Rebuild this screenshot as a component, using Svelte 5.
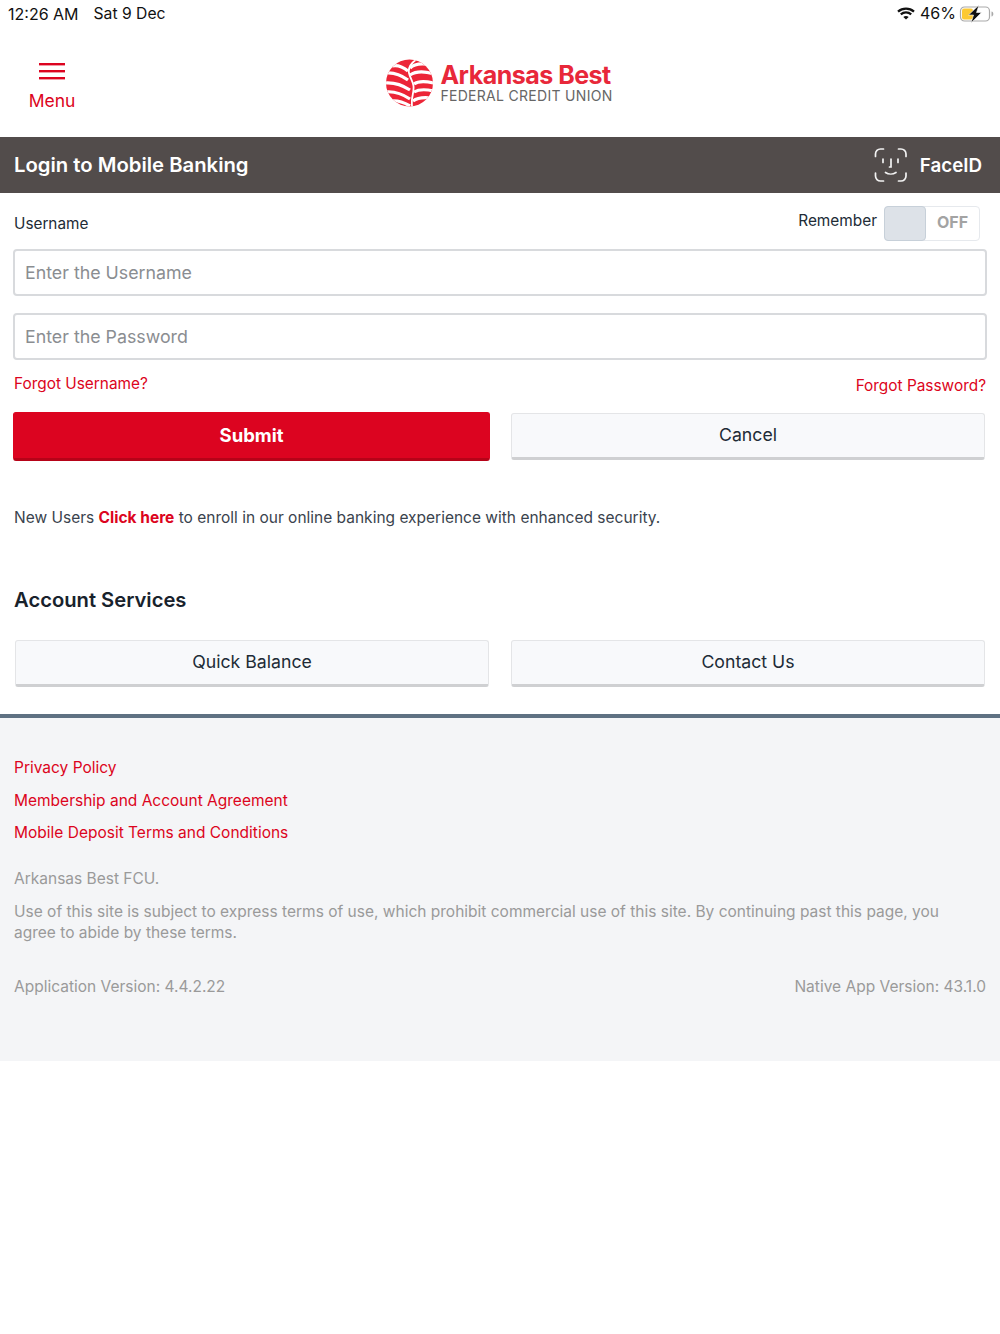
<script>
  const links = ['Privacy Policy', 'Membership and Account Agreement', 'Mobile Deposit Terms and Conditions'];
</script>

<div class="page">
  <div class="status">
    <span class="time">12:26 AM</span>
    <span class="date">Sat 9 Dec</span>
    <span class="status-right">
      <svg class="wifi" width="18" height="13" viewBox="0 0 18 13">
        <path d="M1 4.6C5.6.6 12.4.6 17 4.6" fill="none" stroke="#111" stroke-width="2.3"/>
        <path d="M3.8 7.4c3-2.6 7.4-2.6 10.4 0" fill="none" stroke="#111" stroke-width="2.3"/>
        <path d="M6.3 9.9c1.6-1.3 3.8-1.3 5.4 0L9 12.6z" fill="#111"/>
      </svg>
      <span class="pct">46%</span>
      <svg class="battery" width="35" height="18" viewBox="0 0 35 18">
        <rect x="1.500" y="2" width="29" height="14" rx="4" fill="none" stroke="#aaa" stroke-width="1.200"/>
        <rect x="3" y="3.500" width="11" height="11" rx="2" fill="#fcc934"/>
        <path d="M32.500 6.500c1.200.3 1.800 1.200 1.800 2.500s-.6 2.200-1.800 2.500z" fill="#a9a9a9"/>
        <path d="M20 0 9.500 10h5L12 18 22.500 7.500h-5z" fill="#111" stroke="#fff" stroke-width="0.600"/>
      </svg>
    </span>
  </div>

  <header class="top">
    <div class="menu">
      <svg width="26" height="17" viewBox="0 0 26 17">
        <rect y="0" width="26" height="2.400" fill="#dc0420"/>
        <rect y="7" width="26" height="2.400" fill="#dc0420"/>
        <rect y="14" width="26" height="2.400" fill="#dc0420"/>
      </svg>
      <span>Menu</span>
    </div>
    <div class="logo">
      <svg width="47" height="48" viewBox="0 0 47 48">
        <defs><clipPath id="globe"><circle cx="23.500" cy="24" r="23.500"/></clipPath></defs>
        <g clip-path="url(#globe)">
          <rect width="47" height="48" fill="#ec2537"/>
          <g fill="none" stroke="#fff" stroke-width="3.200">
            <path d="M6 7c6-1.500 11 1 16 5"/>
            <path d="M-1 14c8-1 15 1 23 7"/>
            <path d="M-2 24c9-1 17 1 26 7"/>
            <path d="M-1 33c8-1 16 1 25 7"/>
            <path d="M5 42c6-1 12 1 19 5"/>
            <path d="M24 9c4-4 12-5 22-3"/>
            <path d="M24 16c6-4 14-4 24-1"/>
            <path d="M28 25c4-3 11-3 20-1"/>
            <path d="M28 33c5-3 11-3 20-1"/>
            <path d="M27 42c4-3 9-4 18-3"/>
          </g>
          <path d="M31 0c-6 4-9 9-8 14 1 5 4 8 4.500 13 .5 5-1 9-1.500 13-.3 3 0 6 0 9" fill="none" stroke="#fff" stroke-width="1.800"/>
        </g>
      </svg>
      <div class="logo-text">
        <div class="logo-name">Arkansas Best</div>
        <div class="logo-sub">FEDERAL CREDIT UNION</div>
      </div>
    </div>
  </header>

  <div class="bar">
    <h1>Login to Mobile Banking</h1>
    <div class="faceid">
      <svg width="34" height="36" viewBox="0 0 34 36" fill="none" stroke="#f2f2f2" stroke-width="1.700" stroke-linecap="round">
        <path d="M1.500 9.500V7a5 5 0 0 1 5-5H9.500"/>
        <path d="M24.500 2h2.500a5 5 0 0 1 5 5v2.500"/>
        <path d="M1.500 26v3a5 5 0 0 0 5 5H9.500"/>
        <path d="M24.500 34h2.500a5 5 0 0 0 5-5v-3"/>
        <path d="M9 12v3.500M24 12v3.500"/>
        <path d="M17 12v8h-1.500"/>
        <path d="M11.500 25.500c3 2 7.500 2 10.500 0"/>
      </svg>
      <span>FaceID</span>
    </div>
  </div>

  <main class="form">
    <div class="label-row">
      <label for="user">Username</label>
      <div class="remember">
        <span>Remember</span>
        <div class="toggle"><span class="knob"></span><span class="off">OFF</span></div>
      </div>
    </div>
    <input id="user" class="field" placeholder="Enter the Username" />
    <input class="field second" placeholder="Enter the Password" />
    <div class="forgot">
      <span class="forgot-user">Forgot Username?</span>
      <span class="forgot-pass">Forgot Password?</span>
    </div>
    <div class="btns login-btns">
      <div class="btn primary">Submit</div>
      <div class="btn cancel">Cancel</div>
    </div>
    <p class="enroll">New Users <b>Click here</b> to enroll in our online banking experience with enhanced security.</p>
    <h2>Account Services</h2>
    <div class="btns services">
      <div class="btn">Quick Balance</div>
      <div class="btn">Contact Us</div>
    </div>
  </main>

  <footer>
    <ul>
      {#each links as l}
        <li>{l}</li>
      {/each}
    </ul>
    <p class="org">Arkansas Best FCU.</p>
    <p class="terms">Use of this site is subject to express terms of use, which prohibit commercial use of this site. By continuing past this page, you agree to abide by these terms.</p>
    <div class="versions">
      <span>Application Version: 4.4.2.22</span>
      <span>Native App Version: 43.1.0</span>
    </div>
  </footer>
</div>

<style>
  :global(body) {
    margin: 0;
    background: #fff;
  }
  .page {
    width: 1000px;
    font-family: Inter, "Liberation Sans", sans-serif;
    color: #212b36;
  }
  .status {
    height: 27px;
    display: flex;
    align-items: center;
    padding: 0 8px;
    font-size: 15.700px;
    color: #111;
    box-sizing: border-box;
  }
  .time {
    font-size: 16px;
  }
  .date {
    margin-left: 15px;
  }
  .status-right {
    margin-left: auto;
    display: flex;
    align-items: center;
    gap: 5px;
    margin-right: -2px;
  }
  .pct {
    font-size: 16px;
    margin-right: -2px;
    line-height: 18px;
    margin-bottom: 1px;
  }
  .top {
    height: 110px;
    position: relative;
    display: flex;
    justify-content: center;
  }
  .menu {
    position: absolute;
    left: 29px;
    top: 36px;
    width: 46px;
    display: flex;
    flex-direction: column;
    align-items: center;
    gap: 10px;
    color: #dc0420;
    font-size: 17.500px;
    line-height: 22px;
  }
  .logo {
    display: flex;
    align-items: center;
    gap: 7px;
    height: 48px;
    margin-top: 32px;
    margin-left: -1px;
  }
  .logo-text {
    display: flex;
    flex-direction: column;
    margin-top: -1px;
  }
  .logo-name {
    font-size: 25px;
    font-weight: 700;
    color: #e8283a;
    line-height: 26px;
    letter-spacing: -0.500px;
    white-space: nowrap;
  }
  .logo-sub {
    font-size: 14px;
    color: #666;
    line-height: 15px;
    letter-spacing: 0.300px;
    white-space: nowrap;
  }
  .bar {
    height: 56px;
    background: #524c4b;
    display: flex;
    align-items: center;
    justify-content: space-between;
    padding: 0 18px 0 14px;
    color: #fff;
    box-sizing: border-box;
  }
  h1 {
    margin: 0;
    font-size: 20.300px;
    font-weight: 600;
    position: relative;
    top: -1px;
  }
  .faceid {
    display: flex;
    align-items: center;
    gap: 12px;
    font-size: 18.800px;
    font-weight: 600;
  }
  .form {
    padding: 0 13px 27px 13px;
  }
  .label-row {
    height: 56px;
    display: flex;
    justify-content: space-between;
    align-items: center;
  }
  label {
    font-size: 15.300px;
    position: relative;
    top: 2px;
    left: 1px;
  }
  .remember {
    display: flex;
    align-items: center;
    gap: 7px;
    font-size: 15.400px;
    margin-right: 7px;
    position: relative;
    top: 2px;
  }
  .remember > span {
    position: relative;
    top: -3px;
  }
  .toggle {
    width: 96px;
    height: 35px;
    border: 1px solid #e6e9ed;
    border-radius: 4px;
    display: flex;
    box-sizing: border-box;
  }
  .knob {
    width: 42px;
    margin: -1px 0 -1px -1px;
    background: #dde2e8;
    border: 1px solid #c7d0d9;
    border-radius: 4px;
    box-sizing: border-box;
  }
  .off {
    flex: 1;
    text-align: center;
    line-height: 31px;
    color: #a3a3a3;
    font-weight: 700;
    font-size: 16px;
  }
  .field {
    display: block;
    width: 100%;
    height: 47px;
    box-sizing: border-box;
    border: 2px solid #d8dadd;
    border-radius: 4px;
    padding: 0 10px;
    font: 17.800px Inter, "Liberation Sans", sans-serif;
    background: #fff;
    outline: none;
  }
  .field::placeholder {
    color: #8a8d91;
    opacity: 1;
  }
  .second {
    margin-top: 17px;
  }
  .forgot {
    display: flex;
    justify-content: space-between;
    height: 53px;
    font-size: 15.400px;
    color: #dc0420;
  }
  .forgot-user {
    margin-top: 14px;
    margin-left: 1px;
  }
  .forgot-pass {
    margin-top: 16px;
    margin-right: 1px;
  }
  .btns {
    display: grid;
    grid-template-columns: 477px 474px;
    gap: 21px;
  }
  .btn {
    height: 47px;
    background: #f8f9fb;
    border: 1px solid #e4e5e7;
    border-bottom: 3px solid #cfd0d2;
    border-radius: 3px;
    box-sizing: border-box;
    padding-bottom: 3px;
    display: flex;
    align-items: center;
    justify-content: center;
    font-size: 17.700px;
    color: #212b36;
  }
  .primary {
    height: 49px;
    background: #dc0420;
    border: 1px solid #dc0420;
    border-bottom: 3px solid #b60318;
    color: #fff;
    font-weight: 700;
    margin-top: -1px;
    padding-bottom: 1px;
    font-size: 18.500px;
  }
  .enroll {
    margin: 45px 0 0 1px;
    font-size: 15.500px;
    line-height: 24px;
    color: #3a434d;
  }
  .enroll b {
    color: #dc0420;
    font-weight: 700;
  }
  h2 {
    margin: 55px 0 0 1px;
    font-size: 20.200px;
    line-height: 30px;
    font-weight: 600;
    color: #18222c;
  }
  .services {
    margin-top: 25px;
    padding-left: 2px;
    grid-template-columns: 474px 474px;
    gap: 22px;
  }
  footer {
    background: #f4f5f7;
    border-top: 4px solid #5f7182;
    height: 347px;
    box-sizing: border-box;
    padding: 34px 14px 0 14px;
    font-size: 15.500px;
    color: #9a9a9a;
  }
  ul {
    list-style: none;
    margin: 0;
    padding: 0;
  }
  li {
    color: #dc0420;
    line-height: 32.500px;
  }
  .org {
    margin: 17px 0 0;
    line-height: 24px;
  }
  .terms {
    margin: 10px 0 0;
    line-height: 21px;
    max-width: 945px;
  }
  .versions {
    display: flex;
    justify-content: space-between;
    margin-top: 32px;
    line-height: 24px;
  }
</style>
